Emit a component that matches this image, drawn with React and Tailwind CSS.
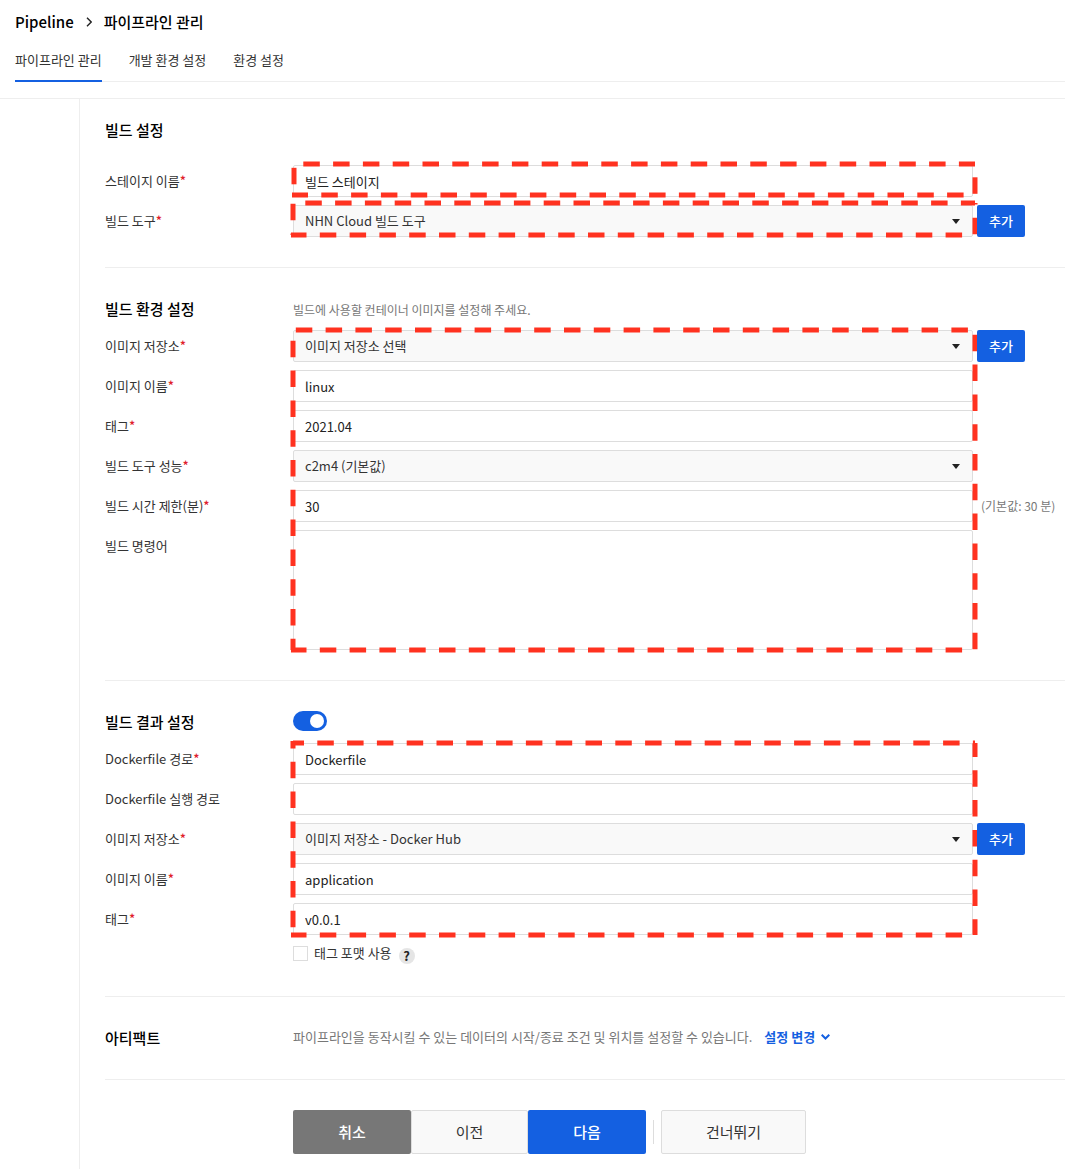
import React from "react";

const inputClass =
  "block h-8 w-full rounded-xs border border-[#ddd] bg-white px-[11px] text-[13px] text-[#222] outline-none";

/* Dashed highlight frame laid over a group of fields. Each side has its own dash phase. */
function Highlight({ top, right, bottom, left, className }) {
  const side = { stroke: "#ff3220", strokeWidth: 5, strokeDasharray: "16.5 13.3" };
  return (
    <svg className={`pointer-events-none absolute overflow-visible ${className}`} aria-hidden="true">
      <line x1="0" y1="0" x2="100%" y2="0" {...side} strokeDashoffset={top} />
      <line x1="100%" y1="0" x2="100%" y2="100%" {...side} strokeDashoffset={right} />
      <line x1="-2" y1="100%" x2="100%" y2="100%" {...side} strokeDashoffset={bottom} />
      <line x1="0" y1="-2" x2="0" y2="100%" {...side} strokeDashoffset={left} />
    </svg>
  );
}

function Row({ id, label, required, aside, children }) {
  return (
    <div className="flex items-start">
      <label htmlFor={id} className="h-8 w-[188px] shrink-0 text-[13px] leading-[31px] text-[#333]">
        {label}
        {required && <span className="font-medium text-[#e0202b]">*</span>}
      </label>
      <div className="min-w-0 flex-1">{children}</div>
      <div className="relative z-10 w-[92px] shrink-0 pl-1">{aside}</div>
    </div>
  );
}

function TextRow({ id, value, ...row }) {
  return (
    <Row id={id} {...row}>
      <input id={id} type="text" defaultValue={value} className={inputClass} />
    </Row>
  );
}

function SelectRow({ id, value, ...row }) {
  return (
    <Row id={id} {...row}>
      <div className="relative">
        <select
          id={id}
          className="block h-8 w-full appearance-none rounded-xs border border-[#ddd] bg-[#f9f9f9] px-[11px] text-[13px] text-[#333] outline-none"
        >
          <option>{value}</option>
        </select>
        <svg
          className="pointer-events-none absolute top-3.5 right-[13px] h-[5px] w-2"
          viewBox="0 0 8 5"
          fill="#222"
          aria-hidden="true"
        >
          <path d="M0 0h8L4 5z" />
        </svg>
      </div>
    </Row>
  );
}

function AddButton() {
  return (
    <button type="button" className="block h-8 w-12 rounded-xs bg-[#1460e1] text-[13px] font-medium text-white">
      추가
    </button>
  );
}

function Heading({ children }) {
  return <h2 className="h-6 w-[188px] shrink-0 text-[15px] leading-[22px] font-medium text-black">{children}</h2>;
}

export default function App() {
  return (
    <div className="flex min-h-screen flex-col bg-white font-['Noto_Sans_CJK_KR',sans-serif] text-[#333]">
      <header className="border-b border-[#eee] pb-4 pl-[15px]">
        <nav className="flex h-11 items-center text-[15px] font-medium text-black" aria-label="breadcrumb">
          <a href="#pipeline">Pipeline</a>
          <svg className="mx-3 h-2.5 w-1.5" viewBox="0 0 6 10" fill="none" stroke="#222" strokeWidth="1.4" aria-hidden="true">
            <path d="M1 0.800L5.200 5L1 9.200" />
          </svg>
          <span>파이프라인 관리</span>
        </nav>
        <nav className="flex h-[38px] gap-[27px] border-b border-[#eee] text-[13px] leading-8">
          <a href="#manage" className="h-[38px] border-b-2 border-[#1460e1]">파이프라인 관리</a>
          <a href="#dev">개발 환경 설정</a>
          <a href="#env">환경 설정</a>
        </nav>
      </header>

      <div className="flex flex-1">
        <aside className="w-20 shrink-0 border-r border-[#eee]" />
        <form className="min-w-0 flex-1 pl-[25px]">
          <section className="border-b border-[#eee] pt-5 pb-[30px]">
            <Heading>빌드 설정</Heading>
            <div className="mt-[22px] flex flex-col gap-2">
              <div className="relative">
                <TextRow id="stage" label="스테이지 이름" required value="빌드 스테이지" />
                <Highlight className="-top-px left-[189px] h-[31px] w-[calc(100%-279px)]" top={20.5} right={16.5} bottom={0.5} left={24} />
              </div>
              <div className="relative">
                <SelectRow id="tool" label="빌드 도구" required value="NHN Cloud 빌드 도구" aside={<AddButton />} />
                <Highlight className="-top-0.5 left-[188px] h-8 w-[calc(100%-278px)]" top={17.5} right={15} bottom={1} left={27} />
              </div>
            </div>
          </section>

          <section className="border-b border-[#eee] py-[30px]">
            <div className="flex items-center">
              <Heading>빌드 환경 설정</Heading>
              <p className="text-[12px] text-[#777]">빌드에 사용할 컨테이너 이미지를 설정해 주세요.</p>
            </div>
            <div className="relative mt-2 flex flex-col gap-2">
              <SelectRow id="store" label="이미지 저장소" required value="이미지 저장소 선택" aside={<AddButton />} />
              <TextRow id="image" label="이미지 이름" required value="linux" />
              <TextRow id="tag" label="태그" required value="2021.04" />
              <SelectRow id="size" label="빌드 도구 성능" required value="c2m4 (기본값)" />
              <TextRow
                id="limit"
                label="빌드 시간 제한(분)"
                required
                value="30"
                aside={<p className="pl-1 text-[12px] leading-8 whitespace-nowrap text-[#777]">(기본값: 30 분)</p>}
              />
              <Row id="command" label="빌드 명령어">
                <textarea
                  id="command"
                  className="block h-[120px] w-full resize-none rounded-xs border border-[#ddd] bg-white px-[11px] py-2 text-[13px] outline-none"
                />
              </Row>
              <Highlight className="top-0 left-[188px] h-full w-[calc(100%-278px)]" top={27} right={25} bottom={1} left={17} />
            </div>
          </section>

          <section className="border-b border-[#eee] py-[30px]">
            <div className="flex items-start">
              <Heading>빌드 결과 설정</Heading>
              <input
                type="checkbox"
                role="switch"
                aria-label="빌드 결과 설정"
                defaultChecked
                className="flex h-5 w-[34px] appearance-none items-center rounded-full bg-[#bbb] px-[3px] before:size-3.5 before:rounded-full before:bg-white checked:justify-end checked:bg-[#1460e1]"
              />
            </div>
            <div className="relative mt-2 flex flex-col gap-2">
              <TextRow id="path" label="Dockerfile 경로" required value="Dockerfile" />
              <TextRow id="run" label="Dockerfile 실행 경로" value="" />
              <SelectRow id="result-store" label="이미지 저장소" required value="이미지 저장소 - Docker Hub" aside={<AddButton />} />
              <TextRow id="result-image" label="이미지 이름" required value="application" />
              <TextRow id="result-tag" label="태그" required value="v0.0.1" />
              <Highlight className="top-0 left-[188px] h-full w-[calc(100%-278px)]" top={5.5} right={2.5} bottom={1} left={9} />
            </div>
            <div className="mt-2 ml-[188px] flex h-[23px] items-start">
              <input id="format" type="checkbox" className="mt-[3px] size-[15px] appearance-none border border-[#ddd] bg-white checked:bg-[#1460e1]" />
              <label htmlFor="format" className="ml-1.5 text-[13px] leading-5">태그 포맷 사용</label>
              <button
                type="button"
                aria-label="도움말"
                className="mt-[5px] ml-[7px] flex size-4 items-center justify-center rounded-full bg-[#e5e5e5] text-[13px] font-bold text-[#222]"
              >
                ?
              </button>
            </div>
          </section>

          <section className="flex h-[83px] items-start border-b border-[#eee] pt-[30px]">
            <Heading>아티팩트</Heading>
            <p className="text-[13px] leading-5 text-[#777]">파이프라인을 동작시킬 수 있는 데이터의 시작/종료 조건 및 위치를 설정할 수 있습니다.</p>
            <button type="button" className="ml-3 flex items-center gap-1.5 text-[13px] leading-5 font-bold text-[#1460e1]">
              설정 변경
              <svg className="h-1.5 w-[9px]" viewBox="0 0 9 6" fill="none" stroke="currentColor" strokeWidth="2" aria-hidden="true">
                <path d="M0.700 0.800L4.500 4.500L8.300 0.800" />
              </svg>
            </button>
          </section>

          <div className="ml-[188px] flex items-center pt-[30px] pb-[15px] text-[15px]">
            <button type="button" className="h-11 w-[118px] rounded-xs bg-[#777] font-medium text-white">취소</button>
            <button type="button" className="h-11 w-[117px] rounded-xs border border-[#ddd] bg-[#f9f9f9]">이전</button>
            <button type="button" className="h-11 w-[118px] rounded-xs bg-[#1460e1] font-medium text-white">다음</button>
            <span className="mx-[7px] h-6 w-px bg-[#ddd]" />
            <button type="button" className="h-11 w-[145px] rounded-xs border border-[#ddd] bg-[#f9f9f9]">건너뛰기</button>
          </div>
        </form>
      </div>
    </div>
  );
}
